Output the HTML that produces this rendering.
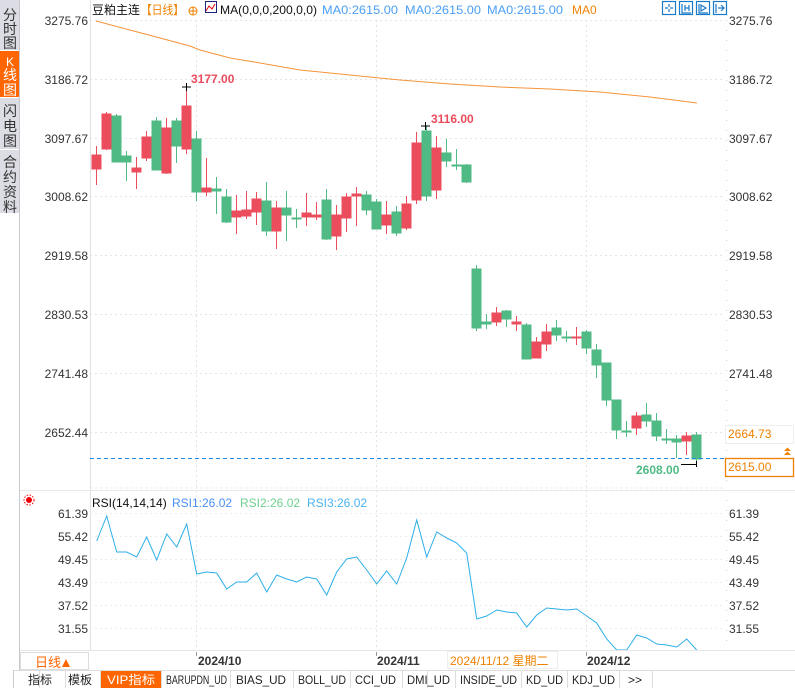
<!DOCTYPE html>
<html><head><meta charset="utf-8"><style>
body{margin:0;width:795px;height:688px;overflow:hidden;background:#fff;font-family:"Liberation Sans","Noto Sans CJK SC",sans-serif;}
svg text{font-family:"Liberation Sans","Noto Sans CJK SC",sans-serif;}
</style></head><body>
<svg width="795" height="688" viewBox="0 0 795 688" xmlns="http://www.w3.org/2000/svg">
<rect x="0" y="0" width="19" height="213" fill="#dcdde4"/>
<rect x="0" y="51" width="19" height="46" fill="#ff6600"/>
<line x1="0" y1="50.5" x2="19" y2="50.5" stroke="#fff"/>
<line x1="0" y1="97.5" x2="19" y2="97.5" stroke="#fff"/>
<line x1="0" y1="149.5" x2="19" y2="149.5" stroke="#fff"/>
<line x1="19.5" y1="0" x2="19.5" y2="650" stroke="#c8c8d0"/>
<g font-size="14" fill="#333" text-anchor="middle">
<text x="10" y="20">分</text><text x="10" y="34">时</text><text x="10" y="48">图</text>
<text x="10" y="66" fill="#fff" font-size="12">K</text><text x="10" y="80" fill="#fff">线</text><text x="10" y="95" fill="#fff">图</text>
<text x="10" y="116">闪</text><text x="10" y="131">电</text><text x="10" y="146">图</text>
<text x="10" y="167">合</text><text x="10" y="182">约</text><text x="10" y="197">资</text><text x="10" y="212">料</text>
</g>
<text x="92" y="14" font-size="12" fill="#111" textLength="48" lengthAdjust="spacingAndGlyphs">豆粕主连</text>
<text x="141" y="14" font-size="12" fill="#f08000" textLength="43" lengthAdjust="spacingAndGlyphs">【日线】</text>
<circle cx="193" cy="11" r="4" fill="none" stroke="#f08000"/><line x1="189" y1="11" x2="197" y2="11" stroke="#f08000"/><line x1="193" y1="7" x2="193" y2="15" stroke="#f08000"/>
<rect x="205.5" y="1.5" width="11" height="11" fill="#fff" stroke="#1a237e"/><path d="M206 11 L209 6 L212 9 L215 4" stroke="#d00" fill="none"/>
<text x="220" y="14" font-size="12" fill="#111" textLength="97" lengthAdjust="spacingAndGlyphs">MA(0,0,0,200,0,0)</text>
<text x="322" y="14" font-size="12" fill="#4a9ff5" textLength="76" lengthAdjust="spacingAndGlyphs">MA0:2615.00</text>
<text x="405" y="14" font-size="12" fill="#4a9ff5" textLength="76" lengthAdjust="spacingAndGlyphs">MA0:2615.00</text>
<text x="487" y="14" font-size="12" fill="#4a9ff5" textLength="76" lengthAdjust="spacingAndGlyphs">MA0:2615.00</text>
<text x="572" y="14" font-size="12" fill="#f08000">MA0</text>
<g fill="none" stroke="#1a7ac8" stroke-width="1.2">
<rect x="662.5" y="1.5" width="13" height="13"/><rect x="679.5" y="1.5" width="13" height="13"/><rect x="696.5" y="1.5" width="13" height="13"/><rect x="713.5" y="1.5" width="13" height="13"/>
<path d="M669 4v3M669 9v3M665 8h3M670 8h3"/><path d="M682 4v9h9M685 5v6M689 5v6M685 8h4"/><path d="M699 4v9h9M701 5l5 3-5 3z"/><path d="M716 4v9M718 8h6M721 5l3 3-3 3"/>
</g>
<g stroke="#e4e4e4" stroke-dasharray="2,3">
<line x1="90" y1="20.5" x2="725" y2="20.5"/><line x1="90" y1="79.5" x2="725" y2="79.5"/><line x1="90" y1="138.5" x2="725" y2="138.5"/><line x1="90" y1="196.5" x2="725" y2="196.5"/><line x1="90" y1="255.5" x2="725" y2="255.5"/><line x1="90" y1="314.5" x2="725" y2="314.5"/><line x1="90" y1="373.5" x2="725" y2="373.5"/><line x1="90" y1="432.5" x2="725" y2="432.5"/>
<line x1="196.5" y1="20" x2="196.5" y2="650"/><line x1="376.5" y1="20" x2="376.5" y2="650"/><line x1="586.5" y1="20" x2="586.5" y2="650"/>
<line x1="90.5" y1="488" x2="725" y2="488"/>
</g>
<line x1="90.5" y1="0" x2="90.5" y2="650" stroke="#e0e0e0"/>
<line x1="726.5" y1="20" x2="726.5" y2="650" stroke="#ccc" stroke-dasharray="1,9"/>
<line x1="20" y1="490.5" x2="795" y2="490.5" stroke="#e8e8e8"/>
<g font-size="12" fill="#333" text-anchor="end">
<text x="88" y="25">3275.76</text><text x="88" y="84">3186.72</text><text x="88" y="143">3097.67</text><text x="88" y="201">3008.62</text><text x="88" y="260">2919.58</text><text x="88" y="319">2830.53</text><text x="88" y="378">2741.48</text><text x="88" y="437">2652.44</text>
</g>
<g font-size="12" fill="#333">
<text x="729" y="25">3275.76</text><text x="729" y="84">3186.72</text><text x="729" y="143">3097.67</text><text x="729" y="201">3008.62</text><text x="729" y="260">2919.58</text><text x="729" y="319">2830.53</text><text x="729" y="378">2741.48</text>
</g>
<rect x="725.5" y="425.5" width="68" height="18" fill="#fff" stroke="#eee"/>
<text x="728" y="438" font-size="12" fill="#f08000">2664.73</text>
<rect x="725.5" y="458.5" width="68" height="18" fill="#fff" stroke="#f08000" stroke-width="1.3"/>
<text x="728" y="471" font-size="12" fill="#f08000">2615.00</text>
<path d="M784 451l3.5-3.5 3.5 3.5zM784 455l3.5-3.5 3.5 3.5z" fill="#f08000"/>
<polyline fill="none" stroke="#f5943a" stroke-width="1" points="96,21 130,30 160,38 190,46 200,50 230,58 260,63 300,70 350,75 400,80 450,84 500,87 550,89 600,92 650,97 697,103"/>
<g stroke="#eb4d5c" fill="#eb4d5c">
<path d="M96.5 146V185M106.5 112V150M136.5 157V189M146.5 131V161M166.5 118V174M186.5 87V154M206.5 158V196M236.5 195V234M246.5 191V219M256.5 192V225M276.5 201V249M306.5 193V226M316.5 202V220M336.5 205V250M346.5 193V232M356.5 187V226M386.5 201V234M406.5 196V230M416.5 132V204M436.5 136V199M496.5 307V326M516.5 316V331M536.5 337V358M546.5 324V351M576.5 327V345M636.5 412V435M686.5 432V455" fill="none"/>
<rect x="92" y="155" width="9" height="14"/><rect x="102" y="114" width="9" height="35"/><rect x="132" y="168" width="9" height="4"/><rect x="142" y="137" width="9" height="21"/><rect x="162" y="128" width="9" height="45"/><rect x="182" y="106" width="9" height="43"/><rect x="202" y="188" width="9" height="4"/><rect x="232" y="211" width="9" height="6"/><rect x="242" y="210" width="9" height="6"/><rect x="252" y="199" width="9" height="13"/><rect x="272" y="208" width="9" height="23"/><rect x="302" y="213" width="9" height="4"/><rect x="312" y="215" width="9" height="2"/><rect x="332" y="215" width="9" height="21"/><rect x="342" y="197" width="9" height="21"/><rect x="352" y="194" width="9" height="2"/><rect x="382" y="215" width="9" height="10"/><rect x="402" y="204" width="9" height="24"/><rect x="412" y="143" width="9" height="57"/><rect x="432" y="148" width="9" height="42"/><rect x="492" y="313" width="9" height="9"/><rect x="512" y="322" width="9" height="2"/><rect x="532" y="342" width="9" height="16"/><rect x="542" y="332" width="9" height="12"/><rect x="572" y="337" width="9" height="1"/><rect x="632" y="416" width="9" height="12"/><rect x="682" y="436" width="9" height="5"/>
</g>
<g stroke="#4fba84" fill="#4fba84">
<path d="M116.5 114V162M126.5 151V181M156.5 117V170M176.5 118V163M196.5 131V201M216.5 177V214M226.5 189V223M266.5 182V236M286.5 191V241M296.5 209V228M326.5 189V240M366.5 191V215M376.5 199V229M396.5 206V236M426.5 126V201M446.5 139V167M456.5 149V170M466.5 164V183M476.5 265V331M486.5 314V329M506.5 310V327M526.5 323V359M556.5 320V341M566.5 331V342M586.5 330V354M596.5 344V378M606.5 363V406M616.5 400V439M626.5 421V437M646.5 403V427M656.5 413V441M666.5 429V444M676.5 435V458M696.5 432V464" fill="none"/>
<rect x="112" y="116" width="9" height="46"/><rect x="122" y="156" width="9" height="6"/><rect x="152" y="121" width="9" height="49"/><rect x="172" y="121" width="9" height="25"/><rect x="192" y="139" width="9" height="53"/><rect x="212" y="189" width="9" height="2"/><rect x="222" y="197" width="9" height="25"/><rect x="262" y="201" width="9" height="30"/><rect x="282" y="208" width="9" height="7"/><rect x="292" y="218" width="9" height="1"/><rect x="322" y="200" width="9" height="39"/><rect x="362" y="195" width="9" height="15"/><rect x="372" y="202" width="9" height="27"/><rect x="392" y="212" width="9" height="21"/><rect x="422" y="131" width="9" height="65"/><rect x="442" y="153" width="9" height="8"/><rect x="452" y="165" width="9" height="1"/><rect x="462" y="165" width="9" height="17"/><rect x="472" y="269" width="9" height="59"/><rect x="482" y="322" width="9" height="2"/><rect x="502" y="311" width="9" height="8"/><rect x="522" y="325" width="9" height="34"/><rect x="552" y="328" width="9" height="7"/><rect x="562" y="337" width="9" height="1"/><rect x="582" y="332" width="9" height="16"/><rect x="592" y="350" width="9" height="15"/><rect x="602" y="363" width="9" height="37"/><rect x="612" y="400" width="9" height="30"/><rect x="622" y="431" width="9" height="1"/><rect x="642" y="415" width="9" height="6"/><rect x="652" y="421" width="9" height="15"/><rect x="662" y="439" width="9" height="1"/><rect x="672" y="439" width="9" height="3"/><rect x="692" y="435" width="9" height="24"/>
</g>
<line x1="90" y1="458.5" x2="725" y2="458.5" stroke="#1e88e5" stroke-dasharray="4,3"/>
<path d="M182 87h9M186.5 83v8" stroke="#000"/>
<text x="191" y="83" font-size="12" font-weight="bold" fill="#e84c5c">3177.00</text>
<path d="M421 126h9M425.5 122v8" stroke="#000"/>
<text x="431" y="123" font-size="12" font-weight="bold" fill="#e84c5c">3116.00</text>
<path d="M681 464.5h16M696.5 461v6" stroke="#000"/>
<text x="636" y="474" font-size="12" font-weight="bold" fill="#4fba84">2608.00</text>
<circle cx="29" cy="500" r="3" fill="#e00"/><circle cx="29" cy="500" r="5" fill="none" stroke="#e00" stroke-dasharray="1.5,1.5"/>
<text x="92" y="507" font-size="12" fill="#111">RSI(14,14,14)</text>
<text x="172" y="507" font-size="12" fill="#4a8ff5">RSI1:26.02</text>
<text x="240" y="507" font-size="12" fill="#6fcf8f">RSI2:26.02</text>
<text x="307" y="507" font-size="12" fill="#4ab2f0">RSI3:26.02</text>
<g stroke="#ececec" stroke-dasharray="2,3">
<line x1="90" y1="513.5" x2="725" y2="513.5"/><line x1="90" y1="536.5" x2="725" y2="536.5"/><line x1="90" y1="559.5" x2="725" y2="559.5"/><line x1="90" y1="582.5" x2="725" y2="582.5"/><line x1="90" y1="605.5" x2="725" y2="605.5"/><line x1="90" y1="628.5" x2="725" y2="628.5"/>
</g>
<g font-size="12" fill="#333" text-anchor="end">
<text x="88" y="518">61.39</text><text x="88" y="541">55.42</text><text x="88" y="564">49.45</text><text x="88" y="587">43.49</text><text x="88" y="610">37.52</text><text x="88" y="633">31.55</text>
</g>
<g font-size="12" fill="#333">
<text x="729" y="518">61.39</text><text x="729" y="541">55.42</text><text x="729" y="564">49.45</text><text x="729" y="587">43.49</text><text x="729" y="610">37.52</text><text x="729" y="633">31.55</text>
</g>
<polyline fill="none" stroke="#2eaee8" stroke-width="1" points="96.7,541 106.7,516 116.7,552 126.7,552 136.7,557 146.7,537 156.7,560 166.7,534 176.7,547 186.7,524 196.7,574 206.7,572 216.7,573 226.7,589 236.7,582 246.7,582 256.7,573 266.7,592 276.7,575 286.7,579 296.7,582 306.7,577 316.7,579 326.7,595 336.7,572 346.7,559 356.7,557 366.7,570 376.7,584 386.7,571 396.7,584 406.7,558 416.7,520 426.7,557 436.7,532 446.7,538 456.7,543 466.7,553 476.7,619 486.7,616 496.7,610 506.7,612 516.7,613 526.7,627 536.7,615 546.7,608 556.7,609 566.7,610 576.7,609 586.7,616 596.7,623 606.7,639 616.7,650 626.7,650 636.7,635 646.7,638 656.7,644 666.7,645 676.7,647 686.7,639 696.7,650"/>
<rect x="20" y="650" width="775" height="20" fill="#fff"/>
<line x1="20" y1="650.5" x2="795" y2="650.5" stroke="#e6e6e6"/>
<line x1="19.5" y1="650" x2="19.5" y2="670" stroke="#c8c8d0"/>
<rect x="20.5" y="652.5" width="68" height="17" fill="#fff" stroke="#ddd"/>
<text x="35" y="667" font-size="13" fill="#ff6600">日线</text><path d="M62 667l4-8 4 8z" fill="#ff6600"/>
<g font-size="12" font-weight="bold" fill="#333">
<text x="198" y="665">2024/10</text><text x="377" y="665">2024/11</text><text x="587" y="665">2024/12</text>
</g>
<line x1="196.5" y1="652" x2="196.5" y2="656" stroke="#999"/><line x1="376.5" y1="652" x2="376.5" y2="656" stroke="#999"/><line x1="586.5" y1="652" x2="586.5" y2="656" stroke="#999"/>
<rect x="447.5" y="651.5" width="110" height="17" fill="#fff" stroke="#eee"/>
<text x="450" y="665" font-size="12" fill="#f08000">2024/11/12 星期二</text>
<rect x="13" y="670" width="782" height="18" fill="#fff"/>
<line x1="13" y1="670.5" x2="795" y2="670.5" stroke="#ddd"/>
<line x1="13.5" y1="670" x2="13.5" y2="688" stroke="#ccc"/>
<rect x="66" y="671" width="34" height="17" fill="#fff"/>
<rect x="100" y="671" width="61" height="17" fill="#ff6600"/>
<g stroke="#ddd"><line x1="39.5" y1="671" x2="39.5" y2="688"/><line x1="65.5" y1="671" x2="65.5" y2="688"/><line x1="100.5" y1="671" x2="100.5" y2="688"/><line x1="161.5" y1="671" x2="161.5" y2="688"/><line x1="230.5" y1="671" x2="230.5" y2="688"/><line x1="293.5" y1="671" x2="293.5" y2="688"/><line x1="350.5" y1="671" x2="350.5" y2="688"/><line x1="402.5" y1="671" x2="402.5" y2="688"/><line x1="455.5" y1="671" x2="455.5" y2="688"/><line x1="521.5" y1="671" x2="521.5" y2="688"/><line x1="567.5" y1="671" x2="567.5" y2="688"/><line x1="619.5" y1="671" x2="619.5" y2="688"/><line x1="652.5" y1="671" x2="652.5" y2="688"/><line x1="427.5" y1="671" x2="427.5" y2="688"/></g>
<g font-size="12" fill="#222">
<text x="28" y="684">指标</text>
<text x="68" y="684">模板</text>
<text x="107" y="684" fill="#fff" textLength="48" lengthAdjust="spacingAndGlyphs">VIP指标</text>
<text x="166" y="684" textLength="61" lengthAdjust="spacingAndGlyphs">BARUPDN_UD</text>
<text x="236" y="684" textLength="50" lengthAdjust="spacingAndGlyphs">BIAS_UD</text>
<text x="298" y="684" textLength="48" lengthAdjust="spacingAndGlyphs">BOLL_UD</text>
<text x="355" y="684" textLength="41" lengthAdjust="spacingAndGlyphs">CCI_UD</text>
<text x="407" y="684" textLength="43" lengthAdjust="spacingAndGlyphs">DMI_UD</text>
<text x="460" y="684" textLength="57" lengthAdjust="spacingAndGlyphs">INSIDE_UD</text>
<text x="526" y="684" textLength="37" lengthAdjust="spacingAndGlyphs">KD_UD</text>
<text x="572" y="684" textLength="43" lengthAdjust="spacingAndGlyphs">KDJ_UD</text>
<text x="628" y="684">&gt;&gt;</text>
</g>
</svg>
</body></html>
